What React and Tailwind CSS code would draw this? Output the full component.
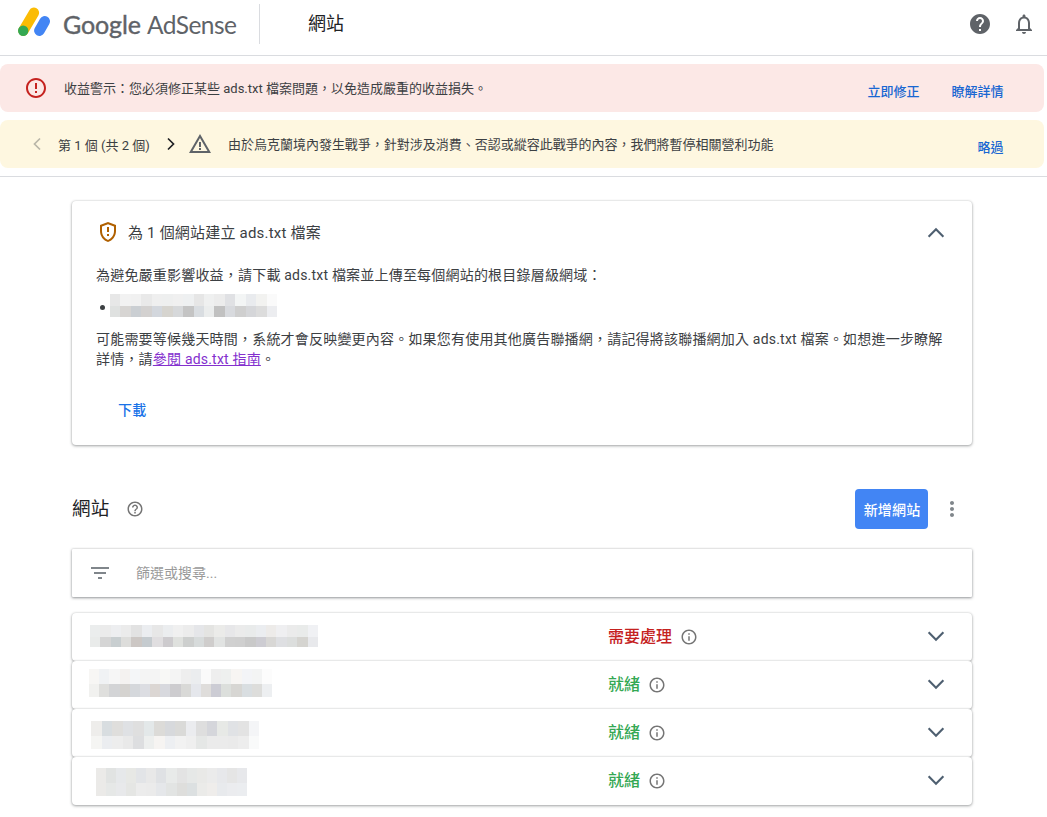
import {
  MdErrorOutline,
  MdWarningAmber,
  MdHelp,
  MdNotificationsNone,
  MdOutlineGppMaybe,
  MdHelpOutline,
  MdInfoOutline,
  MdMoreVert,
  MdFilterList,
} from 'react-icons/md';

const adsTxtMask = [
  ['#e7e7e7', '#f2f2f2', '#f1f1f1', '#e9e9e9', '#efefef', '#eeefef', '#f0f0f0', '#eef0f1', '#e6e6e6', '#eff0f0', '#ececec', '#e0e1e4', '#f3f5f5', '#e9ebee', '#f2f2f0', '#fafafa'],
  ['#dfe1e0', '#d7d5d3', '#cbcfd3', '#d3d1d0', '#d3d7dd', '#d6d4cf', '#d6d8da', '#c4c4c4', '#d9dde1', '#ebeded', '#c1c1c1', '#d8dade', '#cfcfcf', '#d5d6d9', '#dcdcdc', '#ecedf0'],
];

const sites = [
  {
    status: '需要處理',
    alert: true,
    mask: [
      ['#ebeded', '#ebebeb', '#edeef0', '#ebebeb', '#e2e2e2', '#ebedf0', '#e7e7e7', '#ebedef', '#f0f0f0', '#ececec', '#e5e6e9', '#e4e4e2', '#ebebe9', '#e7e7e9', '#ebebeb', '#e9ebeb', '#ebedf0', '#edebe9', '#efeff1', '#ebebeb', '#e9ebea', '#f0f1f4'],
      ['#e9ebea', '#d5d5d5', '#c8ced0', '#dddddb', '#ccc7c4', '#c5cbcf', '#e0dee0', '#cdcbce', '#dfe1de', '#cdcfce', '#d7dbdb', '#cfcdcc', '#e1e3e2', '#d0d0d0', '#cfcfcf', '#c9c9c9', '#cdccd2', '#d8d7d5', '#dedfe2', '#dcdedd', '#d5d4d0', '#e8e9ec'],
    ],
    box: 'ml-[18px] mt-[12px] h-[22px] w-[228px]',
  },
  {
    status: '就緒',
    mask: [
      ['#f7f6f4', '#f0f2f4', '#f6f6f6', '#f4f2f0', '#f4f6f8', '#f4f4f4', '#f4f4f4', '#f8f8f6', '#f4f4f4', '#eeeeee', '#ebedef', '#fafafa', '#eeeeee', '#eef0ef', '#f7f5f3', '#f3f4f7', '#f3f4f4', '#fcfcfc'],
      ['#f1f1ef', '#dfdfdd', '#d3d4d6', '#d5d3d0', '#d5d8dc', '#dcdde2', '#dbd6d3', '#d8d9de', '#cdcccf', '#d9d9d7', '#e5e7ec', '#dfdddb', '#ccccd4', '#dcdfdc', '#d7d6d3', '#d9dee1', '#dddddb', '#edeff1'],
    ],
    box: 'ml-[17px] mt-[8px] h-[28px] w-[183px]',
  },
  {
    status: '就緒',
    mask: [
      ['#eeedeb', '#d8dde0', '#dfdedc', '#dfe1e4', '#dfdfdf', '#e3e8e9', '#dcdbd8', '#d7d9dc', '#dadad8', '#ebecef', '#dedede', '#d5d6db', '#e7e9e6', '#e0e2e5', '#e3e3e3', '#f4f5f7'],
      ['#f5f5f3', '#ebedf0', '#ededed', '#e9e9e9', '#dddee0', '#edefee', '#f6f4f2', '#edeff2', '#f2f2f2', '#efefef', '#e5e7e6', '#ebebeb', '#ebebeb', '#eaeaea', '#ededed', '#f9fafa'],
    ],
    box: 'ml-[19px] mt-[12px] h-[28px] w-[168px]',
  },
  {
    status: '就緒',
    mask: [
      ['#ebeae8', '#e1e3e2', '#e6e8ea', '#e7e8e5', '#e2e4e7', '#e8e8e8', '#dfe1e4', '#e8eae9', '#e3e3e3', '#e6e8e7', '#e9e9e7', '#ebebeb', '#e7e8eb', '#e5e5e5', '#e7e8eb'],
      ['#ebeae8', '#e6e8e7', '#e8e9eb', '#e5e6e4', '#ececec', '#ebebeb', '#e5e7ea', '#e2e4e3', '#dededc', '#dce0e1', '#ebebe9', '#efedeb', '#e8eaed', '#ebecef', '#ebedf0'],
    ],
    box: 'ml-[24px] mt-[11px] h-[28px] w-[151px]',
  },
];

function Mask({ rows, className }) {
  return (
    <div className={'flex flex-col ' + className}>
      {rows.map((row, i) => (
        <div key={i} className="flex flex-1 odd:flex-[1.1]">
          {row.map((color, j) => (
            <div key={j} className="flex-1" style={{ backgroundColor: color }} />
          ))}
        </div>
      ))}
    </div>
  );
}

function Chevron({ up }) {
  return (
    <svg width="18" height="12" viewBox="0 0 18 12" fill="none" stroke="#4e5f70" strokeWidth="2.1">
      <path d={up ? 'M1.6 9.7 9 2.3l7.4 7.4' : 'M1.6 2.3 9 9.7l7.4-7.4'} />
    </svg>
  );
}

function PagerArrow({ d, className }) {
  return (
    <svg width="24" height="24" viewBox="0 0 24 24" fill="none" stroke="currentColor" strokeWidth="1.7" className={className}>
      <path d={d} />
    </svg>
  );
}

function Logo() {
  return (
    <svg width="34" height="30" viewBox="17 7 34 30" fill="none" strokeLinecap="round">
      <path d="M33.9 12.8 23.4 30.7" stroke="#fbbc04" strokeWidth="10.4" />
      <path d="M44.7 21.3 39.4 30.6" stroke="#4285f4" strokeWidth="10.6" />
      <circle cx="23.2" cy="30.7" r="5.2" fill="#34a853" />
    </svg>
  );
}

function Header() {
  return (
    <header className="flex h-14 items-start border-b border-[#dadce0]">
      <div className="ml-[17px] mt-[7px]">
        <Logo />
      </div>
      <div className="ml-3 mt-[6px] flex h-9 w-[175px] items-baseline whitespace-nowrap font-[Lato] leading-9 text-[#5f6368]">
        <span className="w-[84px] shrink-0 text-[25px] tracking-[-0.1px] [-webkit-text-stroke:0.4px]">Google</span>
        <span className="text-[24.5px] tracking-[-0.55px]">AdSense</span>
      </div>
      <div className="ml-[21px] mt-1 h-10 w-px bg-[#dadce0]" />
      <h1 className="ml-12 mt-[11px] text-[18px] leading-[26px] text-[#202124]">網站</h1>
      <div className="ml-auto mr-[11px] mt-3 flex gap-5 text-[#5f6368]">
        <MdHelp size={24} />
        <MdNotificationsNone size={24} />
      </div>
    </header>
  );
}

function Alerts() {
  return (
    <section className="flex flex-col gap-2 border-b border-[#dadce0] py-2 pr-[3px] text-[13px] text-[#3c4043]">
      <div className="flex h-12 items-center rounded-lg bg-[#fce8e6] pl-6 pr-[40.5px]">
        <MdErrorOutline size={24} color="#c5221f" />
        <p className="ml-4 pt-0.5">收益警示：您必須修正某些 ads.txt 檔案問題，以免造成嚴重的收益損失。</p>
        <div className="ml-auto flex gap-8 pt-[7px] font-medium text-[#1967d2]">
          <span>立即修正</span>
          <span>瞭解詳情</span>
        </div>
      </div>
      <div className="flex h-12 items-center rounded-lg bg-[#fef7e0] pl-[25px] pr-[40.5px]">
        <PagerArrow d="m15 6.5-5.5 5.5 5.5 5.5" className="opacity-35" />
        <span className="ml-[9px] w-[92px] whitespace-nowrap pt-1">第 1 個 (共 2 個)</span>
        <PagerArrow d="m9 6.5 5.5 5.5-5.5 5.5" className="ml-[9px] text-[#202124]" />
        <MdWarningAmber size={24} className="ml-[5px] text-[#5f6368]" />
        <p className="ml-4 pt-0.5 tracking-[-0.015px]">由於烏克蘭境內發生戰爭，針對涉及消費、否認或縱容此戰爭的內容，我們將暫停相關營利功能</p>
        <span className="ml-auto pt-[7px] font-medium text-[#1967d2]">略過</span>
      </div>
    </section>
  );
}

function AdsTxtCard() {
  return (
    <section className="mt-6 h-[244px] rounded bg-white px-6 text-[14px] leading-5 tracking-[0.2px] text-[#3c4043] shadow-[0_1px_3px_rgba(60,64,67,0.45),0_0_2px_rgba(60,64,67,0.2)]">
      <div className="flex h-16 items-center pb-0.5">
        <MdOutlineGppMaybe size={24} color="#b06000" />
        <h2 className="ml-2 pt-0.5 text-[15px]">為 1 個網站建立 ads.txt 檔案</h2>
        <div className="ml-auto mr-[3px] mt-0.5">
          <Chevron up />
        </div>
      </div>
      <p>為避免嚴重影響收益，請下載 ads.txt 檔案並上傳至每個網站的根目錄層級網域：</p>
      <div className="mt-[9px] flex h-[23px] items-start pl-[3.5px]">
        <span className="mt-[11px] size-[5px] rounded-full bg-[#3c4043]" />
        <Mask rows={adsTxtMask} className="ml-[5.5px] h-[23px] w-[167px]" />
      </div>
      <p className="mt-3">
        可能需要等候幾天時間，系統才會反映變更內容。如果您有使用其他廣告聯播網，請記得將該聯播網加入 ads.txt 檔案。如想進一步瞭解詳情，請
        <a className="text-[#8430ce] underline">參閱 ads.txt 指南</a>。
      </p>
      <button className="ml-[22px] mt-[31px] block font-medium text-[#1a73e8]">下載</button>
    </section>
  );
}

function SiteRow({ site }) {
  return (
    <li className="flex h-12 rounded bg-white shadow-[0_1px_3px_rgba(60,64,67,0.45),0_0_2px_rgba(60,64,67,0.2)]">
      <div className="w-[536px]">
        <Mask rows={site.mask} className={site.box} />
      </div>
      <div className="flex items-center gap-2">
        <span className={site.alert ? 'text-[16px] font-medium text-[#c5221f]' : 'text-[16px] font-medium text-[#34a853]'}>
          {site.status}
        </span>
        <MdInfoOutline size={18} className="text-[#757575]" />
      </div>
      <div className="ml-auto mr-[27px] flex items-center pb-0.5">
        <Chevron />
      </div>
    </li>
  );
}

export default function App() {
  return (
    <div className="h-[817px] overflow-hidden bg-white font-[Roboto,'Noto_Sans_CJK_TC',sans-serif]">
      <Header />
      <Alerts />
      <main className="mx-auto ml-[72px] w-[900px]">
        <AdsTxtCard />
        <div className="mt-11 flex h-10 items-center">
          <h2 className="w-[54px] pt-0.5 text-[18.5px] tracking-[0.2px] text-[#202124]">網站</h2>
          <MdHelpOutline size={18} className="text-[#757575]" />
          <button className="ml-auto h-10 w-[73px] rounded bg-[#4285f4] pl-px pt-0.5 text-[14px] font-medium tracking-[0.15px] text-white">新增網站</button>
          <MdMoreVert size={24} className="ml-3 mr-2 text-[#80868b]" />
        </div>
        <div className="mt-5 flex h-[48px] items-center rounded-[1px] bg-white pl-4 shadow-[0_1px_3px_rgba(60,64,67,0.5),0_0_2px_rgba(60,64,67,0.25)]">
          <MdFilterList size={24} className="text-[#80868b]" />
          <span className="ml-6 text-[14px] text-[#9a9a9a]">篩選或搜尋...</span>
        </div>
        <ul className="mt-4">
          {sites.map((site, i) => (
            <SiteRow key={i} site={site} />
          ))}
        </ul>
      </main>
    </div>
  );
}
